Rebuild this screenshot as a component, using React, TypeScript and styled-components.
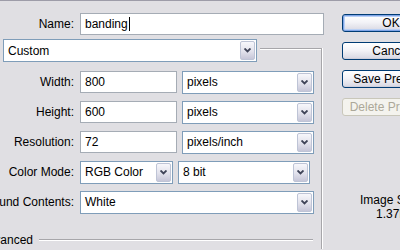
import React from 'react';
import styled, { createGlobalStyle } from 'styled-components';

const GlobalStyle = createGlobalStyle`
  html, body {
    margin: 0;
    padding: 0;
    background: #e0dfe3;
    overflow: hidden;
  }
  body {
    font-family: 'Liberation Sans', Arial, sans-serif;
    font-size: 12px;
    color: #000;
  }
`;

const Dialog = styled.div`
  width: 400px;
  height: 250px;
  box-sizing: border-box;
  border-top: 1px solid #9d9ca8;
  display: flex;
  gap: 18px;
  overflow: hidden;
`;

const Form = styled.div`
  width: 324px;
  flex-shrink: 0;
  padding-top: 12px;
  display: flex;
  flex-direction: column;
`;

const Row = styled.div`
  display: flex;
  align-items: center;
  height: 22px;
  gap: 6px;
`;

const Label = styled.div`
  width: 74px;
  flex-shrink: 0;
  display: flex;
  justify-content: flex-end;
  white-space: nowrap;
  overflow: visible;
`;

const TextInput = styled.div<{ $width?: number }>`
  box-sizing: border-box;
  height: 22px;
  width: ${({ $width }) => ($width ? `${$width}px` : 'auto')};
  flex: ${({ $width }) => ($width ? '0 0 auto' : '1')};
  background: #fff;
  border: 1px solid #a5acb5;
  padding-left: 4px;
  display: flex;
  align-items: center;
  white-space: nowrap;
`;

const Caret = styled.span`
  display: inline-block;
  width: 1px;
  height: 14px;
  background: #000;
  margin-left: 1px;
`;

const SelectBox = styled.div<{ $width?: number }>`
  box-sizing: border-box;
  height: 23px;
  width: ${({ $width }) => ($width ? `${$width}px` : 'auto')};
  flex: ${({ $width }) => ($width ? '0 0 auto' : '1')};
  background: #fff;
  border: 1px solid #7f9db9;
  display: flex;
  align-items: stretch;
`;

const SelectText = styled.div`
  flex: 1;
  padding-left: 4px;
  display: flex;
  align-items: center;
  white-space: nowrap;
  overflow: hidden;
`;

const ArrowButton = styled.div`
  width: 15px;
  margin: 1px;
  box-sizing: border-box;
  border: 1px solid #bec4d6;
  border-radius: 2px;
  background: linear-gradient(#f7f7fb, #e2e2ec 55%, #c6c6d8);
  display: flex;
  align-items: center;
  justify-content: center;
`;

const Group = styled.div`
  margin-top: 13px;
  border-top: 1px solid #a7a6aa;
  border-right: 1px solid #a7a6aa;
  box-shadow: inset 0 1px 0 #fff, 1px 0 0 #fff;
  margin-right: 2px;
  height: 200px;
  display: flex;
  flex-direction: column;
`;

const Legend = styled.div`
  margin-top: -10px;
  width: 260px;
  padding-left: 3px;
  box-sizing: border-box;
  background: #e0dfe3;
`;

const Rows = styled.div`
  margin-top: 9px;
  display: flex;
  flex-direction: column;
  gap: 8px;
  width: 314px;
`;

const Pair = styled.div`
  display: flex;
  align-items: center;
  gap: 5px;
`;

const Advanced = styled.div`
  margin-top: 20px;
  display: flex;
  align-items: center;
  gap: 6px;
  width: 313px;
  height: 14px;
`;

const AdvancedLabel = styled.div`
  width: 33px;
  flex-shrink: 0;
  display: flex;
  justify-content: flex-end;
  white-space: nowrap;
`;

const Rule = styled.div`
  flex: 1;
  height: 0;
  border-top: 1px solid #a7a6aa;
  border-bottom: 1px solid #fff;
`;

const Side = styled.div`
  width: 98px;
  flex-shrink: 0;
  padding-top: 13px;
  display: flex;
  flex-direction: column;
  gap: 10px;
`;

const Button = styled.div<{ $primary?: boolean; $disabled?: boolean }>`
  box-sizing: border-box;
  height: 18px;
  border-radius: 3px;
  border: 1px solid ${({ $disabled }) => ($disabled ? '#c9c7ba' : '#003c74')};
  background: ${({ $disabled }) =>
    $disabled ? '#f4f3ee' : 'linear-gradient(#ffffff, #f3f3f7 45%, #dcdce6 90%, #c8c8d6)'};
  box-shadow: ${({ $primary }) => ($primary ? 'inset 0 0 0 1px #7fa4e6, inset 0 0 0 2px #b9d0f5' : 'none')};
  color: ${({ $disabled }) => ($disabled ? '#aca899' : '#000')};
  display: flex;
  align-items: center;
  justify-content: center;
  white-space: nowrap;
`;

const ImageSize = styled.div`
  margin-top: 67px;
  padding-left: 18px;
  display: flex;
  flex-direction: column;
  line-height: 14px;
`;

const SizeValue = styled.span`
  padding-left: 16px;
`;

const Chevron = () => (
  <svg width="7" height="5" viewBox="0 0 7 5">
    <path d="M0.5 0.5 L3.5 3.5 L6.5 0.5" fill="none" stroke="#3f4458" strokeWidth="1.9" />
  </svg>
);

const Select = ({ value, width }: { value: string; width?: number }) => (
  <SelectBox $width={width}>
    <SelectText>{value}</SelectText>
    <ArrowButton>
      <Chevron />
    </ArrowButton>
  </SelectBox>
);

export default function App() {
  return (
    <>
      <GlobalStyle />
      <Dialog>
        <Form>
          <Row>
            <Label>Name:</Label>
            <TextInput>
              banding
              <Caret />
            </TextInput>
          </Row>
          <Group>
            <Legend>
              <Select value="Custom" width={254} />
            </Legend>
            <Rows>
              <Row>
                <Label>Width:</Label>
                <Pair>
                  <TextInput $width={97}>800</TextInput>
                  <Select value="pixels" width={132} />
                </Pair>
              </Row>
              <Row>
                <Label>Height:</Label>
                <Pair>
                  <TextInput $width={97}>600</TextInput>
                  <Select value="pixels" width={132} />
                </Pair>
              </Row>
              <Row>
                <Label>Resolution:</Label>
                <Pair>
                  <TextInput $width={97}>72</TextInput>
                  <Select value="pixels/inch" width={132} />
                </Pair>
              </Row>
              <Row>
                <Label>Color Mode:</Label>
                <Pair>
                  <Select value="RGB Color" width={93} />
                  <Select value="8 bit" width={132} />
                </Pair>
              </Row>
              <Row>
                <Label>Background Contents:</Label>
                <Select value="White" width={234} />
              </Row>
            </Rows>
            <Advanced>
              <AdvancedLabel>Advanced</AdvancedLabel>
              <Rule />
            </Advanced>
          </Group>
        </Form>
        <Side>
          <Button $primary>OK</Button>
          <Button>Cancel</Button>
          <Button>Save Preset...</Button>
          <Button $disabled>Delete Preset...</Button>
          <ImageSize>
            <span>Image Size:</span>
            <SizeValue>1.37M</SizeValue>
          </ImageSize>
        </Side>
      </Dialog>
    </>
  );
}
